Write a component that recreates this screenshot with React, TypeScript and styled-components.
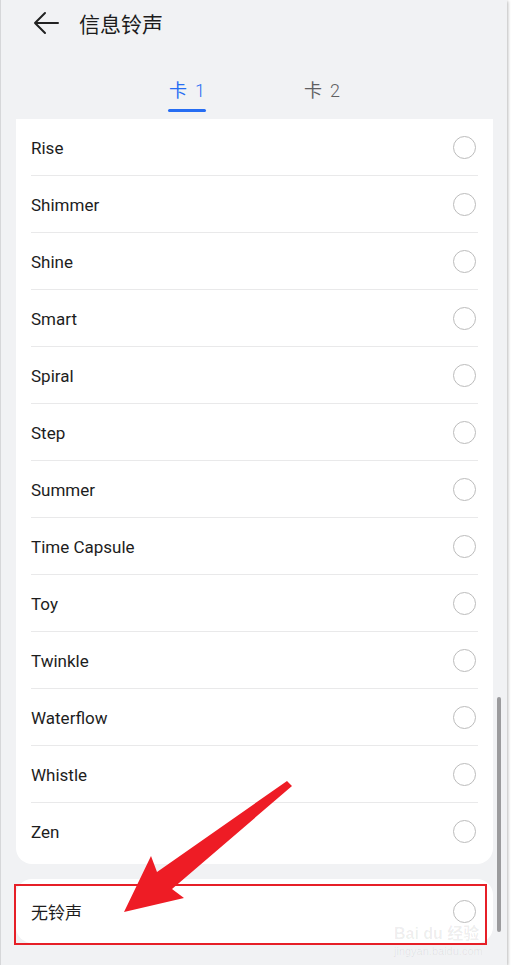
import React from 'react';
import styled, { createGlobalStyle } from 'styled-components';

const GlobalStyle = createGlobalStyle`
  html, body {
    margin: 0;
    padding: 0;
    background: #ffffff;
  }
  body {
    font-family: Roboto, "Noto Sans", "Noto Sans CJK SC", sans-serif;
  }
`;

const Screen = styled.div`
  position: relative;
  width: 507px;
  height: 965px;
  background: #f1f2f4;
  border-left: 1px solid #d6d7d9;
  box-sizing: border-box;
  box-shadow: 1px 1px 3px rgba(0, 0, 0, 0.28);
  overflow: hidden;
  display: flex;
  flex-direction: column;
`;

const TopBar = styled.div`
  height: 45px;
  display: flex;
  align-items: center;
  padding-left: 32px;
  gap: 19px;
`;

const BackButton = styled.div`
  width: 27px;
  height: 24px;
  display: flex;
  align-items: center;
`;

const Title = styled.h1`
  margin: 0;
  font-family: "Noto Sans CJK SC", sans-serif;
  font-size: 21px;
  font-weight: 400;
  color: #1c1c1c;
`;

const Tabs = styled.div`
  height: 74px;
  display: flex;
  gap: 97px;
  box-sizing: border-box;
  padding: 32px 0 0 167px;
`;

const Tab = styled.div<{ active?: boolean }>`
  width: 38px;
  display: flex;
  flex-direction: column;
  align-items: center;
  gap: 6px;
  font-family: "Noto Sans CJK SC", sans-serif;
  font-size: 18px;
  line-height: 24px;
  white-space: nowrap;
  color: ${(p) => (p.active ? '#266df3' : '#5f6062')};
  &::after {
    content: '';
    width: 38px;
    height: 3px;
    border-radius: 2px;
    background: ${(p) => (p.active ? '#266df3' : 'transparent')};
  }
`;

const TabNum = styled.span`
  font-family: Roboto, sans-serif;
  font-weight: 300;
  margin-left: 8px;
`;

const Card = styled.div<{ flatTop?: boolean }>`
  margin: 0 14px 0 15px;
  background: #ffffff;
  border-radius: ${(p) => (p.flatTop ? '0 0 16px 16px' : '16px')};
  padding: 0 15px ${(p) => (p.flatTop ? '4px' : '0')};
`;

const Row = styled.div<{ last?: boolean; tall?: boolean }>`
  height: ${(p) => (p.tall ? '64px' : '57px')};
  box-sizing: border-box;
  display: flex;
  align-items: center;
  justify-content: space-between;
  border-bottom: ${(p) => (p.last ? 'none' : '1px solid #e9e9ea')};
  padding-top: ${(p) => (p.last ? '0' : '1px')};
`;

const Label = styled.span`
  font-family: Roboto, "Noto Sans CJK SC", sans-serif;
  font-size: 17px;
  color: #1d1d1d;
`;

const Radio = styled.span`
  width: 21px;
  height: 21px;
  border: 1.6px solid #bcbcbc;
  border-radius: 50%;
  margin-right: 2px;
`;

const Gap = styled.div`
  height: 15px;
`;

const ScrollThumb = styled.div`
  position: absolute;
  left: 496px;
  top: 697px;
  width: 4px;
  height: 235px;
  border-radius: 2px;
  background: #9b9b9d;
`;

const Highlight = styled.div`
  position: absolute;
  left: 13px;
  top: 884px;
  width: 473px;
  height: 61px;
  border: 2px solid #e61f27;
  box-sizing: border-box;
`;

const Overlay = styled.svg`
  position: absolute;
  left: 0;
  top: 0;
  pointer-events: none;
`;

const Watermark = styled.div`
  position: absolute;
  left: 393px;
  top: 924px;
  display: flex;
  flex-direction: column;
  align-items: flex-start;
  white-space: nowrap;
  color: rgba(0, 0, 0, 0.07);
  font-family: "Liberation Sans", "Noto Sans CJK SC", sans-serif;
`;

const MarkBig = styled.span`
  font-size: 16px;
  font-weight: 700;
  line-height: 20px;
`;

const MarkSmall = styled.span`
  font-size: 11px;
  line-height: 14px;
`;

const tones = [
  'Rise',
  'Shimmer',
  'Shine',
  'Smart',
  'Spiral',
  'Step',
  'Summer',
  'Time Capsule',
  'Toy',
  'Twinkle',
  'Waterflow',
  'Whistle',
  'Zen',
];

export default function App() {
  return (
    <>
      <GlobalStyle />
      <Screen>
        <TopBar>
          <BackButton>
            <svg width="27" height="24" viewBox="0 0 27 24">
              <path
                d="M25 12H2M12 2L2 12l10 10"
                fill="none"
                stroke="#222"
                strokeWidth="2"
                strokeLinecap="round"
                strokeLinejoin="round"
              />
            </svg>
          </BackButton>
          <Title>信息铃声</Title>
        </TopBar>
        <Tabs>
          <Tab active>
            <span>
              卡<TabNum>1</TabNum>
            </span>
          </Tab>
          <Tab>
            <span>
              卡<TabNum>2</TabNum>
            </span>
          </Tab>
        </Tabs>
        <Card flatTop>
          {tones.map((t, i) => (
            <Row key={t} last={i === tones.length - 1}>
              <Label>{t}</Label>
              <Radio />
            </Row>
          ))}
        </Card>
        <Gap />
        <Card>
          <Row last tall>
            <Label>无铃声</Label>
            <Radio />
          </Row>
        </Card>

        <ScrollThumb />
        <Watermark>
          <MarkBig>Bai du 经验</MarkBig>
          <MarkSmall>jingyan.baidu.com</MarkSmall>
        </Watermark>
        <Highlight />
        <Overlay width="507" height="965" viewBox="0 0 507 965">
          <polygon
            points="286,781 291,786 171,889 183,898 123,912 150,856 156,872"
            fill="#ee1c25"
          />
        </Overlay>
      </Screen>
    </>
  );
}
